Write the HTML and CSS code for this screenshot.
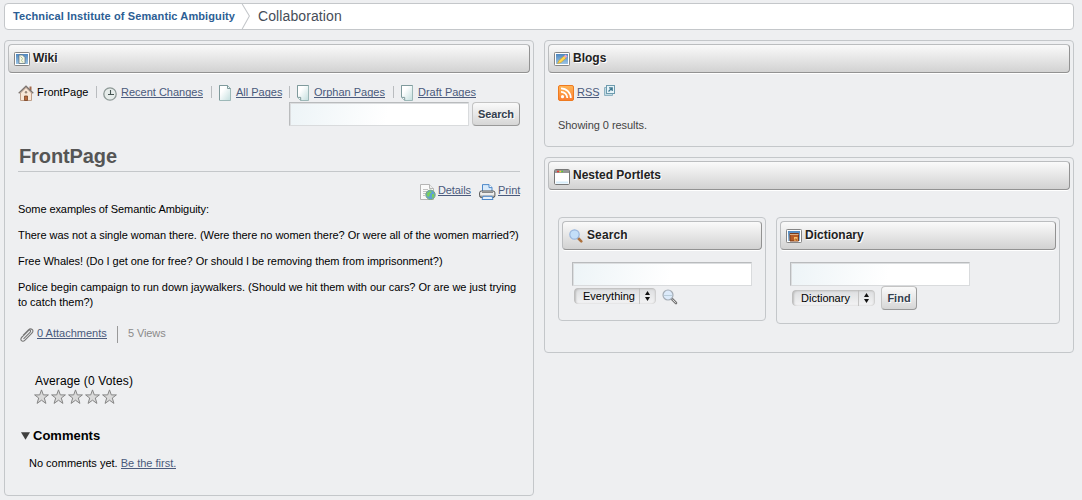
FILE: index.html
```
<!DOCTYPE html>
<html lang="en">
<head>
<meta charset="utf-8">
<title>Collaboration</title>
<link rel="stylesheet" href="styles.css">
</head>
<body>
<svg class="defs" width="0" height="0" aria-hidden="true">
  <defs>
    <linearGradient id="page" x1="1" y1="1" x2="0" y2="0"><stop offset="0" stop-color="#c3dede"/><stop offset=".7" stop-color="#fff"/></linearGradient>
    <linearGradient id="sky" x1="0" y1="0" x2="0" y2="1"><stop offset="0" stop-color="#4f88c0"/><stop offset="1" stop-color="#9cc4e4"/></linearGradient>
    <linearGradient id="orange" x1="0" y1="0" x2="0" y2="1"><stop offset="0" stop-color="#ffb657"/><stop offset="1" stop-color="#fb7d33"/></linearGradient>
    <linearGradient id="metal" x1="0" y1="0" x2="0" y2="1"><stop offset="0" stop-color="#ddd"/><stop offset=".5" stop-color="#f4f4f4"/><stop offset="1" stop-color="#777"/></linearGradient>
    <symbol id="frame" viewBox="0 0 16 14"><rect x=".5" y=".5" width="15" height="13" rx=".8" fill="#fff" stroke="#858585"/><rect x="2" y="2" width="12" height="10" fill="url(#sky)"/></symbol>
    <symbol id="sheet" viewBox="0 0 13 16"><path d="M.5.500h11v15H3.500l-3-3z" fill="url(#page)" stroke="#9db8b8"/><path d="M.5 12V.500h11" fill="none" stroke="#7f9a9c"/><path d="M.8 12.400h2.900v2.900" fill="#eef6f6" stroke="#7f9a9c"/></symbol>
    <symbol id="star" viewBox="0 0 17 16"><path d="M7.500.9 9.300 5.900h5.100L10.300 9l1.600 5.400-4.400-3.200-4.400 3.200L4.700 9 .6 5.900h5.100z" fill="#dadada" stroke="#858585"/></symbol>
  </defs>
</svg>

<nav class="breadcrumb">
  <a class="crumb-home">Technical Institute of Semantic Ambiguity</a>
  <svg class="crumb-sep" width="11" height="26" viewBox="0 0 11 26"><path d="M1 0l7.500 12.500L1 26" fill="none" stroke="#c4c7ca" stroke-width="1.100"/></svg>
  <span class="crumb-page">Collaboration</span>
</nav>

<main class="columns">
  <section class="portlet wiki">
    <header class="bar">
      <svg class="bar-icon" width="16" height="14"><use href="#frame"/><path d="M5 3h3.500l2.500 2.500v6H5z" fill="#f5f5e8" stroke="#5c6b73" stroke-width=".7"/><path d="M6.500 4.500l2 2-1 2 1.500 2" fill="none" stroke="#a9c884" stroke-width=".9"/></svg>
      <h2>Wiki</h2>
    </header>
    <div class="wiki-body">
      <ul class="tabs">
        <li class="tab t1"><svg width="16" height="16" viewBox="0 0 16 16"><path d="M2.500 8v7.500h11V8L8 2.500z" fill="#f8e6d6" stroke="#c0a08a"/><path d="M11.500 1.500h2v4h-2z" fill="#a5684a"/><path d="M.7 8.300 8 1.200l7.300 7.100" fill="none" stroke="#7d746f" stroke-width="1.300"/><path d="M6.500 15.500v-4.500h3v4.500z" fill="#b8683a" stroke="#7a4526" stroke-width=".8"/><circle cx="8" cy="7.300" r="1.200" fill="#9a8878"/></svg><span>FrontPage</span></li>
        <li class="tab t2"><svg width="14" height="16" viewBox="0 0 14 16"><circle cx="7" cy="9" r="6.200" fill="#e6ecea" stroke="#8d9896" stroke-width="1.300"/><path d="M7.500 5v4.500H11M5 9.500h2" fill="none" stroke="#465553" stroke-width="1.100"/></svg><a>Recent Changes</a></li>
        <li class="tab t3"><svg width="13" height="16" viewBox="0 0 13 16"><path d="M.5.500h8l3 3v12H.5z" fill="url(#page)" stroke="#9db8b8"/><path d="M.5 15V.500h8v3h3" fill="none" stroke="#7f9a9c"/></svg><a>All Pages</a></li>
        <li class="tab t4"><svg width="13" height="16"><use href="#sheet"/></svg><a>Orphan Pages</a></li>
        <li class="tab t5"><svg width="13" height="16"><use href="#sheet"/></svg><a>Draft Pages</a></li>
      </ul>
      <div class="wiki-search"><input class="field" type="text" aria-label="Search wiki"><button class="btn btn-search">Search</button></div>
      <h1>FrontPage</h1>
      <div class="actions">
        <svg width="16" height="16" viewBox="0 0 16 16"><path d="M.5.500h9l4 4v11H.5z" fill="#fafafa" stroke="#b5b5b5"/><path d="M9.500.500v4h4" fill="#eee" stroke="#b5b5b5"/><path d="M3 5.500h5M3 7.500h4M3 9.500h3M3 11.500h2" stroke="#c2c2c2"/><circle cx="10.500" cy="10.800" r="4.700" fill="#5f9fd4" stroke="#7cab76"/><path d="M7 9l3-2 2 1-2 2-1 3-2-1zM12 10h2v3l-2 1z" fill="#7ad05c"/></svg><a class="details">Details</a>
        <svg width="17" height="16" viewBox="0 0 17 16"><path d="M3.500 8V.600h6.500l3 3V8z" fill="#d9eafa" stroke="#4d88ca"/><path d="M10 .600v3h3" fill="#fff" stroke="#4d88ca"/><rect x=".6" y="7" width="15.300" height="6.500" rx="1.800" fill="url(#metal)" stroke="#555"/><path d="M3 8.500h11" stroke="#888"/><path d="M4 12.300h9l1 3.200H3z" fill="#e8f1fb" stroke="#4d88ca"/></svg><a class="print">Print</a>
      </div>
      <div class="article">
        <p><span class="p1">Some examples of Semantic Ambiguity:</span></p>
        <p><span class="p2">There was not a single woman there. (Were there no women there? Or were all of the women married?)</span></p>
        <p><span class="p3">Free Whales! (Do I get one for free? Or should I be removing them from imprisonment?)</span></p>
        <p class="p4"><span>Police begin campaign to run down jaywalkers. (Should we hit them with our cars? Or are we just trying</span><br><span>to catch them?)</span></p>
      </div>
      <div class="meta">
        <svg width="14" height="14" viewBox="0 0 14 14"><path d="M3.500 10.800 10 4.300c1.600-1.600-.2-3-1.500-1.700L2 9c-3 3 .5 5.600 3 3.100l6.900-6.900c3-3-1-5.800-3.500-3.300L3 7.300" fill="none" stroke="#777" stroke-width="1.100"/></svg>
        <a class="attach">0 Attachments</a><span class="views">5 Views</span>
      </div>
      <div class="rating">
        <span class="average">Average (0 Votes)</span>
        <div class="stars"><svg width="17" height="16"><use href="#star"/></svg><svg width="17" height="16"><use href="#star"/></svg><svg width="17" height="16"><use href="#star"/></svg><svg width="17" height="16"><use href="#star"/></svg><svg width="17" height="16"><use href="#star"/></svg></div>
      </div>
      <h3><svg width="9" height="8" viewBox="0 0 9 8"><path d="M0 .300h9L4.500 7.700z" fill="#3f3f3f"/></svg><span>Comments</span></h3>
      <div class="none"><span class="no-comments">No comments yet.</span> <a class="first">Be the first.</a></div>
    </div>
  </section>

  <div class="side">
    <section class="portlet blogs">
      <header class="bar">
        <svg class="bar-icon" width="16" height="14"><use href="#frame"/><path d="M3.500 11.500 5 8.500 10 4l2 2-5 4.500z" fill="#ffd64d" stroke="#c79a2c" stroke-width=".6"/><path d="M9.800 4.200 11.500 2.500l2 1.700-1.600 1.900z" fill="#eaa6c4"/></svg>
        <h2>Blogs</h2>
      </header>
      <div class="blogs-body">
        <div class="rss">
          <svg width="16" height="16" viewBox="0 0 16 16"><rect x=".5" y=".5" width="15" height="15" rx="1.500" fill="url(#orange)" stroke="#ee7a20"/><circle cx="4.500" cy="11.700" r="1.600" fill="#fff"/><path d="M3 6.800a6.300 6.300 0 0 1 6.300 6.300M3 3.300A9.800 9.800 0 0 1 12.800 13.100" fill="none" stroke="#fff" stroke-width="1.800"/></svg>
          <a class="rss-link">RSS</a>
          <svg class="ext" width="11" height="11" viewBox="0 0 11 11"><path d="M2.500 2.500h-2v8h8v-2" fill="#c4dbe4" stroke="#8fb3c2"/><rect x="2.500" y=".5" width="8" height="8" fill="#e6f3f8" stroke="#6d9bae"/><path d="M4.500 6.500 8 3M5 2.800h3.200V6" fill="none" stroke="#417a92" stroke-width="1.300"/></svg>
        </div>
        <p><span class="showing">Showing 0 results.</span></p>
      </div>
    </section>

    <section class="portlet nested">
      <header class="bar">
        <svg class="bar-icon" width="16" height="16" viewBox="0 0 16 16"><rect x=".5" y=".5" width="15" height="15" rx="1.200" fill="#fff" stroke="#777"/><path d="M1 1h14v3H1z" fill="#969696"/><path d="M3 2.500h2" stroke="#e33" stroke-width="1.600"/><path d="M5.500 2.500h1.500" stroke="#ed3" stroke-width="1.600"/><path d="M7.500 2.500h1.500" stroke="#5c3" stroke-width="1.600"/><path d="M2 12.500h12v2H2z" fill="#d6edfa"/></svg>
        <h2>Nested Portlets</h2>
      </header>
      <div class="nested-body">
        <section class="portlet box-search">
          <header class="bar">
            <svg class="bar-icon" width="14" height="14" viewBox="0 0 14 14"><path d="M8.500 8.500 12.300 12.300" stroke="#ad713d" stroke-width="2.600" stroke-linecap="round"/><circle cx="5.500" cy="5.500" r="4.700" fill="#c3def8" stroke="#9ab6dc" stroke-width="1.200"/></svg>
            <h2>Search</h2>
          </header>
          <div class="form">
            <input class="field" type="text" aria-label="Search">
            <div class="controls"><span class="select s1"><span class="value">Everything</span><svg width="5" height="10" viewBox="0 0 5 10"><path d="M2.500 0 5 4H0zM0 6h5L2.500 10z" fill="#111"/></svg></span>
            <svg class="find-icon" width="16" height="16" viewBox="0 0 16 16"><path d="M9.500 9.500 14 14" stroke="#777" stroke-width="2.600" stroke-linecap="round"/><path d="M10.500 10.500 13.800 13.800" stroke="#ddd"/><circle cx="6" cy="6" r="5" fill="#dceafa" stroke="#a5adb6" stroke-width="1.200"/><path d="M2 6.500h8" stroke="#b9cdda"/></svg></div>
          </div>
        </section>
        <section class="portlet box-dict">
          <header class="bar">
            <svg class="bar-icon" width="16" height="14"><use href="#frame"/><path d="M4 12V4.500h8.500V12z" fill="#b85c24" stroke="#7c3b19"/><path d="M4 5.500h8.500" stroke="#d9ad82"/><path d="M8 8h3.500v4H8z" fill="#f9be68"/><path d="M9 12v-2h1.500v2" fill="none" stroke="#9d4618" stroke-width=".7"/></svg>
            <h2>Dictionary</h2>
          </header>
          <div class="form">
            <input class="field" type="text" aria-label="Dictionary">
            <div class="controls"><span class="select s2"><span class="value">Dictionary</span><svg width="5" height="10" viewBox="0 0 5 10"><path d="M2.500 0 5 4H0zM0 6h5L2.500 10z" fill="#111"/></svg></span><button class="btn btn-find">Find</button></div>
          </div>
        </section>
      </div>
    </section>
  </div>
</main>
</body>
</html>
```
FILE: styles.css
```
* { box-sizing: border-box; }
body { margin: 0; padding: 3px 8px 4px 4px; height: 500px; overflow: hidden; background: #eeeff1; color: #000; font: 11px/15px "Liberation Sans", Arial, sans-serif; }
.defs { display: block; height: 0; }
h1, h2, h3, p, ul { margin: 0; padding: 0; }
svg { display: block; flex: none; }
a { color: #4a5a7c; text-decoration: none; }
span, a, h2 { white-space: nowrap; }

.breadcrumb { display: flex; height: 27px; background: #fff; border: 1px solid #c4c7ca; border-radius: 4px; }
.crumb-home { width: 228px; padding-left: 8px; line-height: 25px; font-weight: bold; color: #2c5e94; letter-spacing: .11px; }
.crumb-sep { margin-left: 8px; height: 25px; }
.crumb-page { margin-left: 6px; font-size: 14px; line-height: 24px; color: #464d58; letter-spacing: .1px; }

.columns { display: flex; gap: 10px; margin-top: 10px; align-items: flex-start; }
.portlet { border: 1px solid #c4c7ca; border-radius: 4px; padding: 3px; }
.wiki { width: 530px; height: 456px; }
.side { width: 530px; display: grid; gap: 10px; }
.blogs { height: 107px; }
.nested { height: 196px; }

.bar { display: flex; height: 29px; padding-left: 5px; border: 1px solid #bbbdbf; border-right-color: #929292; border-bottom-color: #929292; border-radius: 4px; background: linear-gradient(#fafafa, #d2d2d2); box-shadow: 0 1px 0 #fff; }
.bar-icon { margin-top: 7px; }
.bar h2 { margin-left: 3px; font-size: 12px; line-height: 26px; color: #222; text-shadow: 1px 1px 0 #fff; }

.wiki-body { padding: 12px 10px 0; }
.tabs { display: flex; height: 17px; list-style: none; }
.tab { display: flex; line-height: 14px; border-left: 1px solid #b9bcbf; height: 12px; margin-top: 1px; padding-left: 6px; }
.tab svg { margin-top: -1px; }
.tab.t1 { border: 0; padding: 0; width: 78px; }
.t2 { width: 115px; } .t3 { width: 78px; } .t4 { width: 104px; }
.t3 svg, .t4 svg, .t5 svg { margin-left: 1px; }
.t1 span { margin-left: 3px; }
.tab a { height: 12px; line-height: 13px; border-bottom: 1px solid #4a5a7c; margin-left: 4px; }
.tab.t1 span { line-height: 13px; }
.wiki-search { display: flex; justify-content: flex-end; gap: 3px; height: 24px; }
.field { display: block; width: 180px; height: 24px; margin: 0; padding: 0; border: 1px solid #d9dbdd; border-top-color: #b9bbbd; border-left-color: #b9bbbd; box-shadow: inset 1px 1px 0 #dcdee0; background: linear-gradient(100deg, #edf4f7, #fff 55%); }
.btn { padding: 0; border: 1px solid #c4c4c4; border-right-color: #999; border-bottom-color: #999; border-radius: 4px; background: linear-gradient(#fafafa, #d6d6d6); font: bold 11px/20px "Liberation Sans", Arial, sans-serif; color: #34404f; text-shadow: 1px 1px 0 #fff; height: 24px; }
.btn-search { width: 48px; letter-spacing: -.15px; }

h1 { height: 46px; padding: 18px 0 0 1px; border-bottom: 1px solid #c4c7ca; font-size: 20px; line-height: 24px; color: #555; letter-spacing: -.1px; }
.actions { display: flex; justify-content: flex-end; margin-top: 12px; height: 18px; }
.actions a, .meta a, .none a, .rss a { height: 12px; line-height: 12px; border-bottom: 1px solid #4a5a7c; }
.details { width: 33px; margin: 0 8px 0 2px; letter-spacing: -.1px; }
.print { width: 22px; margin-left: 2px; letter-spacing: -.1px; }
.article p { margin-bottom: 11px; }
.p1 { letter-spacing: -.08px; }
.p2 { letter-spacing: -.043px; }
.p3 { letter-spacing: -.04px; }
.p4 { letter-spacing: -.038px; }
.meta { display: flex; margin: 16px 0 0 2px; height: 17px; }
.article p:last-child { margin-bottom: 0; }
.meta svg { margin-top: 2px; }
.attach { width: 70px; margin: 1px 10px 0 3px; }
.views { padding-left: 10px; border-left: 1px solid #999; color: #8a8a8a; letter-spacing: -.1px; }
.rating { margin: 30px 0 0 16px; }
.average { display: block; margin-left: 1px; font-size: 12px; line-height: 16px; letter-spacing: .13px; }
.stars { display: flex; }
h3 { display: flex; align-items: center; gap: 3px; margin: 23px 0 0 3px; height: 16px; font-size: 13px; line-height: 16px; }
.none { display: flex; margin: 13px 0 0 11px; height: 15px; line-height: 13px; }
.none .first { margin-left: 3px; }

.blogs-body { padding: 12px 10px; color: #444; }
.rss { display: flex; height: 33px; }
.rss-link { width: 22px; margin-left: 3px; }
.rss a.rss-link { height: 13px; line-height: 14px; }
.showing { letter-spacing: -.05px; }
.ext { margin-left: 5px; margin-top: 0; }

.nested-body { display: flex; align-items: flex-start; gap: 10px; padding: 27px 10px 0; }
.box-search { width: 208px; height: 104px; }
.box-dict { width: 284px; height: 107px; }
.box-search h2 { margin-left: 4px; letter-spacing: .1px; }
.box-search .bar-icon { margin-left: 1px; }
.form { padding: 12px 10px 0; }
.controls { display: flex; padding-left: 2px; }
.select { display: flex; align-items: center; justify-content: space-between; height: 16px; margin-top: 2px; padding: 0 6px 0 9px; border-radius: 4px; background: linear-gradient(90deg, transparent 79%, #c4c4c4 79%, #c4c4c4 80.200%, transparent 80.200%), linear-gradient(#dcdddf, #f4f4f5); box-shadow: inset 2px 1px 2px #bcbcbc, inset -1px 0 2px #c8c8c8; }
.select .value { line-height: 15px; }
.s1 { width: 82px; } .s2 { width: 83px; margin-top: 4px; }
.find-icon { margin: 3px 0 0 6px; }
.btn-find { width: 36px; margin-left: 6px; }
```
